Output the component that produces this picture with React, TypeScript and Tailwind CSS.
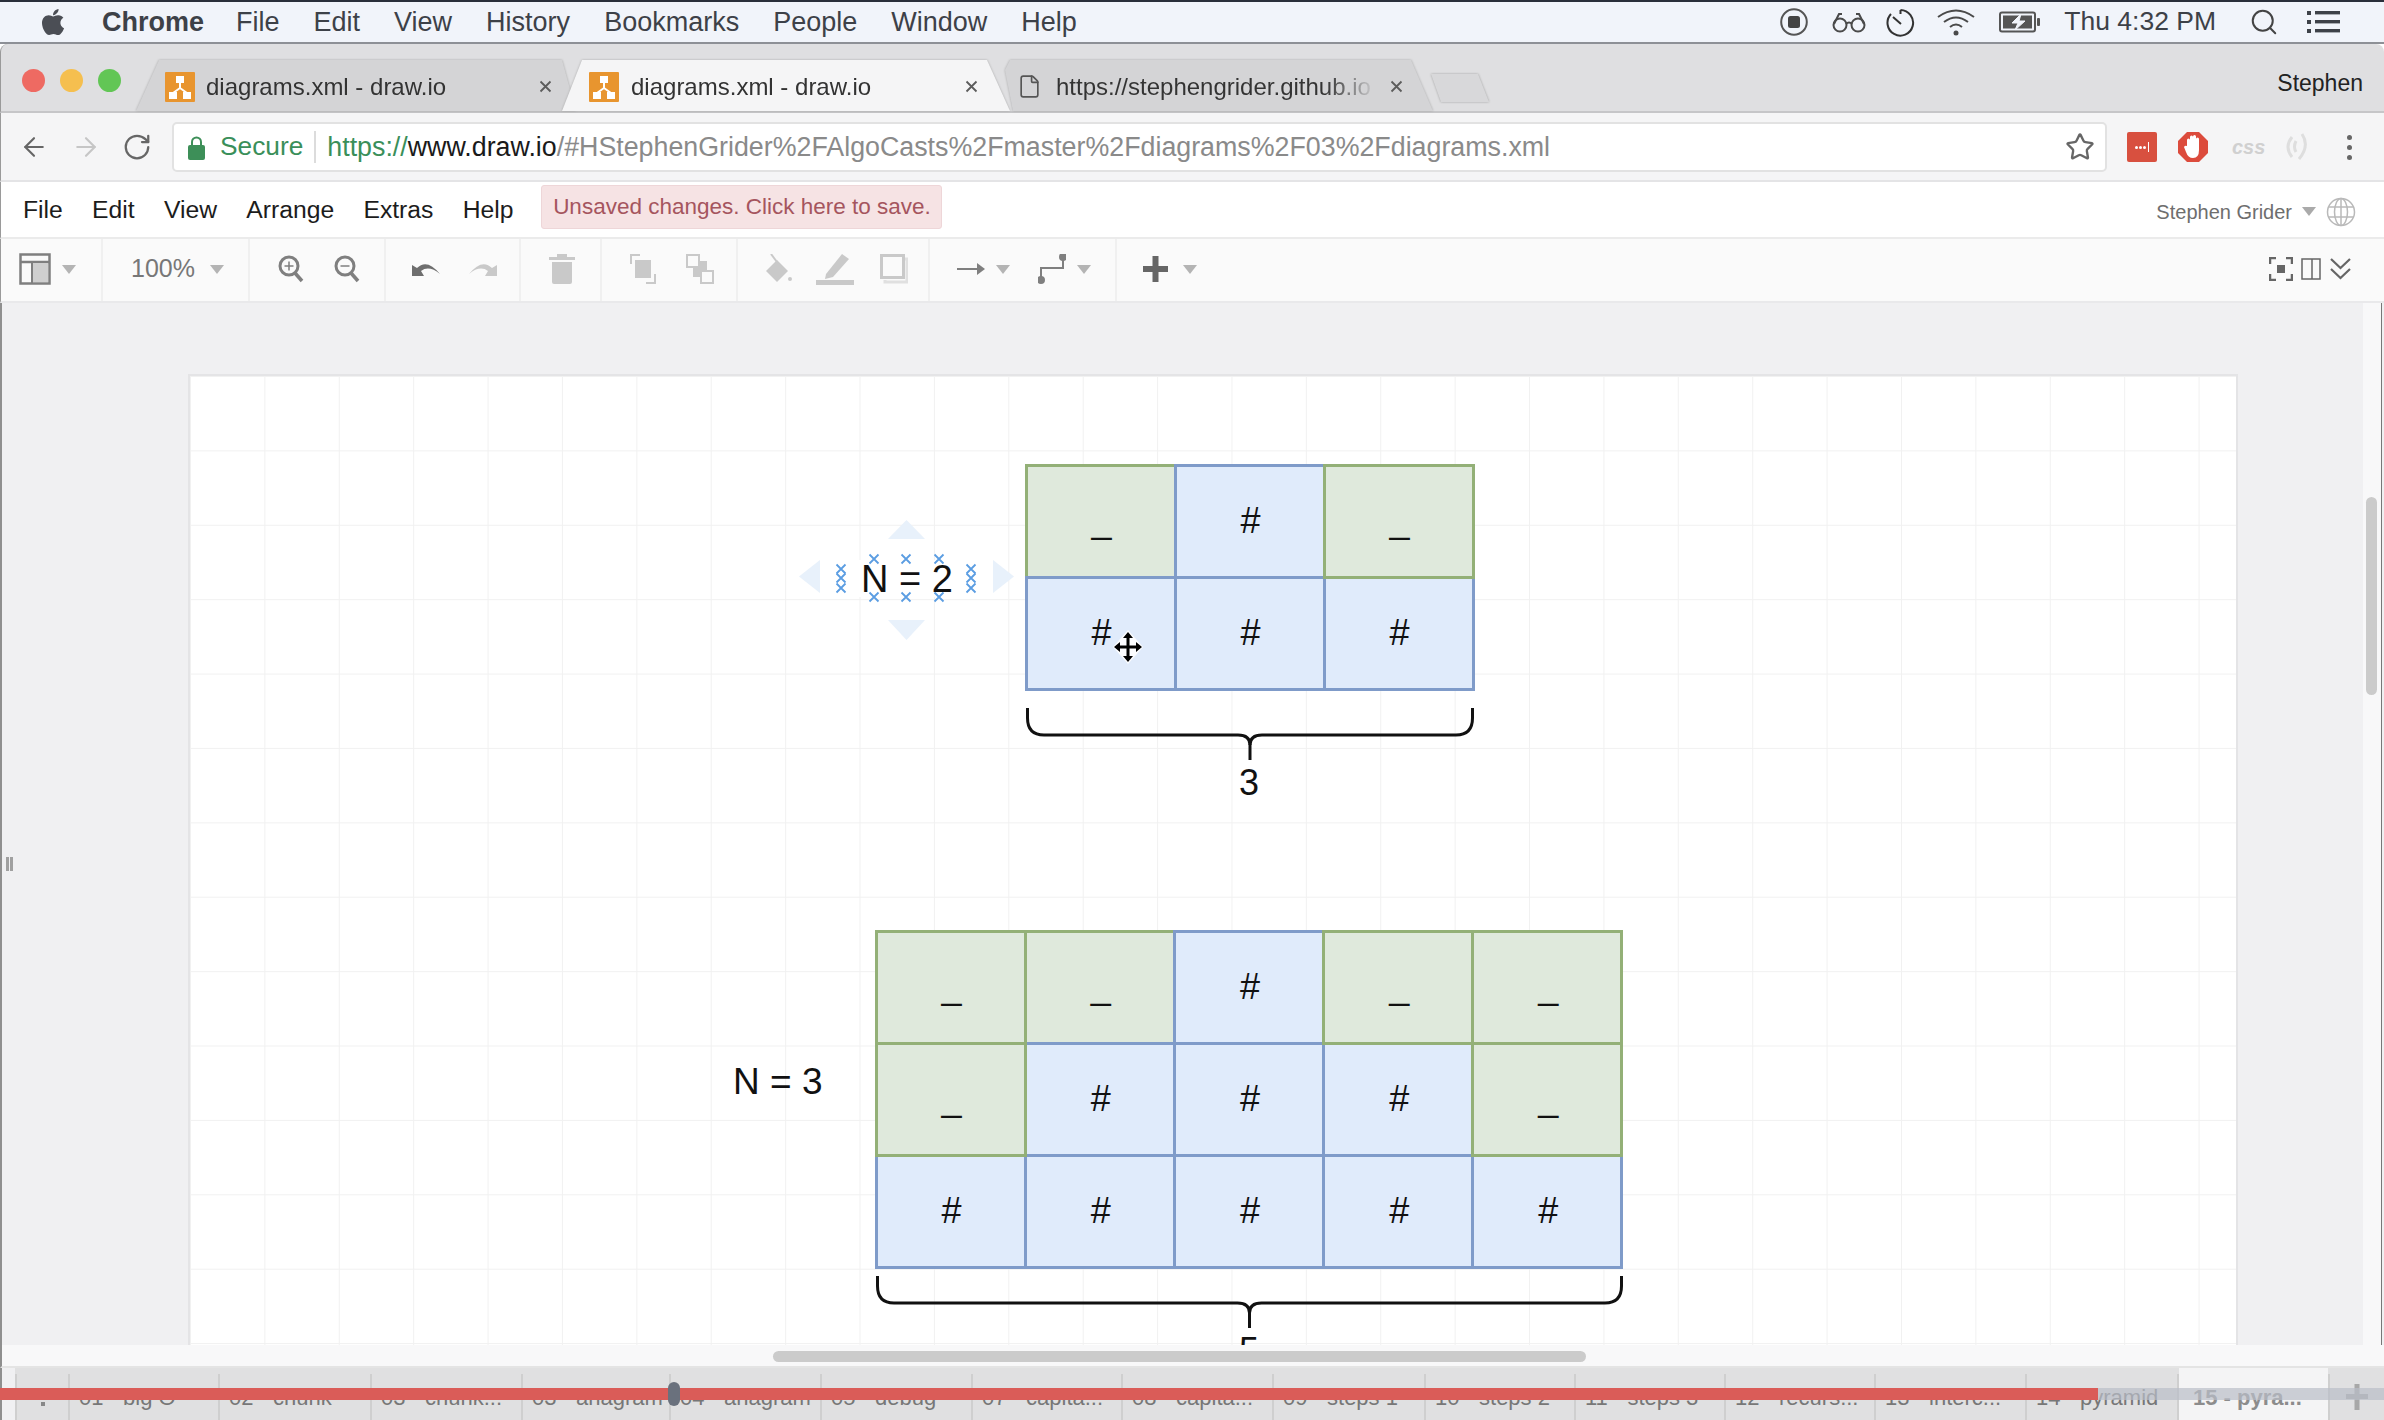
import React from "react";
import { FaApple } from "react-icons/fa";
import { ArrowLeft, ArrowRight, RotateCw, Star, Search, File } from "lucide-react";

const Caret = ({ c = "#b4b4b4" }: { c?: string }) => (
  <svg width="14" height="9" viewBox="0 0 14 9" className="shrink-0"><path d="M0 0H14L7 9Z" fill={c} /></svg>
);

const Favicon = () => (
  <svg width="30" height="30" viewBox="0 0 30 30" className="shrink-0">
    <rect width="30" height="30" rx="1" fill="#e8952f" />
    <path d="M15 10V16M15 16L8 21M15 16L22 21" stroke="#fff" strokeWidth="2" fill="none" />
    <rect x="11" y="4" width="8" height="7" fill="#fff" />
    <rect x="4" y="20" width="8" height="7" fill="#fff" />
    <rect x="18" y="20" width="8" height="7" fill="#fff" />
  </svg>
);

const TabX = () => (
  <svg width="13" height="13" viewBox="0 0 13 13" className="shrink-0">
    <path d="M1.5 1.5L11.5 11.5M11.5 1.5L1.5 11.5" stroke="#5c5c5c" strokeWidth="1.8" />
  </svg>
);

function MacBar() {
  const items = ["File", "Edit", "View", "History", "Bookmarks", "People", "Window", "Help"];
  return (
    <div className="h-[44px] shrink-0 flex items-center bg-[#f1f4fa] border-t-2 border-b-2 border-t-[#2a2f3a] border-b-[#8d9096] text-[#3d4148] text-[27px] pl-[38px] pr-[44px]">
      <FaApple size={30} color="#4b4e55" className="shrink-0" />
      <span className="ml-[34px] font-bold">Chrome</span>
      <div className="flex gap-[34px] ml-[32px]">
        {items.map((t) => (
          <span key={t}>{t}</span>
        ))}
      </div>
      <div className="ml-auto flex items-center">
        <svg width="28" height="28" viewBox="0 0 28 28"><circle cx="14" cy="14" r="12.8" fill="none" stroke="#555" strokeWidth="2" /><rect x="8" y="8" width="12" height="12" rx="2.5" fill="#444" /></svg>
        <svg width="34" height="21" viewBox="0 0 34 21" className="ml-[24px]" fill="none" stroke="#4a4a4a" strokeWidth="2"><circle cx="8" cy="13" r="6.5" /><circle cx="26" cy="13" r="6.5" /><path d="M14 12Q17 9 20 12M2 12L7 2H10M32 12L27 2H24" /></svg>
        <svg width="29" height="29" viewBox="0 0 29 29" className="ml-[20px]" fill="none" stroke="#333" strokeWidth="2"><path d="M14.5 2A12.8 12.8 0 1 1 5 6" /><path d="M14.5 2V6M7 9L15 16" /></svg>
        <svg width="38" height="28" viewBox="0 0 38 28" className="ml-[22px]" fill="none" stroke="#4a4a4a" strokeWidth="2"><path d="M1 9Q19 -4 37 9M7 14Q19 5 31 14M13 19Q19 14 25 19" /><circle cx="19" cy="25" r="2.5" fill="#4a4a4a" stroke="none" /></svg>
        <svg width="42" height="22" viewBox="0 0 42 22" className="ml-[24px]"><rect x="1" y="1.5" width="35" height="19" rx="2" fill="none" stroke="#555" strokeWidth="2" /><rect x="4" y="4.5" width="29" height="13" fill="#555" /><path d="M22 3L13 12H19L16 19L26 10H20Z" fill="#f1f4fa" stroke="#f1f4fa" /><rect x="38" y="7" width="3" height="8" rx="1" fill="#555" /></svg>
        <span className="ml-[23px] text-[26.5px] whitespace-nowrap">Thu 4:32 PM</span>
        <Search size={30} strokeWidth={1.6} color="#444" className="ml-[33px]" />
        <svg width="33" height="24" viewBox="0 0 33 24" className="ml-[28px]" fill="#3d4148"><rect x="0" y="1" width="4" height="4" /><rect x="8" y="1" width="25" height="3.4" /><rect x="0" y="10" width="4" height="4" /><rect x="8" y="10" width="25" height="3.4" /><rect x="0" y="19" width="4" height="4" /><rect x="8" y="19" width="25" height="3.4" /></svg>
      </div>
    </div>
  );
}

function TabStrip() {
  return (
    <div className="h-[69px] shrink-0 flex items-end bg-[#dfdfe1] border-b-2 border-[#c6c6c8] rounded-t-[8px] border-l border-l-[#9a9a9a]">
      <div className="flex gap-[15px] ml-[21px] self-start mt-[25px]">
        <span className="w-[23px] h-[23px] rounded-full bg-[#ee6a62]" />
        <span className="w-[23px] h-[23px] rounded-full bg-[#f5bf4f]" />
        <span className="w-[23px] h-[23px] rounded-full bg-[#62c655]" />
      </div>
      <div className="ml-[15px] w-[440px] h-[51px] shrink-0 [filter:drop-shadow(0_0_1px_#a8a8a8)]">
        <div className="h-full flex items-center bg-[#d4d4d6] [clip-path:polygon(23px_0,426px_0,440px_100%,0_100%)] pl-[29px] pr-[24px] pt-[2px] text-[24px] text-[#333]">
          <Favicon />
          <span className="ml-[11px] whitespace-nowrap">diagrams.xml - draw.io</span>
          <span className="ml-auto"><TabX /></span>
        </div>
      </div>
      <div className="ml-[-14px] relative z-10 w-[448px] h-[51px] shrink-0 [filter:drop-shadow(0_0_1px_#a8a8a8)]">
        <div className="h-full flex items-center bg-[#f5f5f6] [clip-path:polygon(20px_0,425px_0,448px_100%,0_100%)] pl-[27px] pr-[32px] pt-[2px] text-[24px] text-[#333]">
          <Favicon />
          <span className="ml-[12px] whitespace-nowrap">diagrams.xml - draw.io</span>
          <span className="ml-auto"><TabX /></span>
        </div>
      </div>
      <div className="ml-[-5px] w-[428px] h-[51px] shrink-0 [filter:drop-shadow(0_0_1px_#a8a8a8)]">
        <div className="h-full flex items-center bg-[#d4d4d6] [clip-path:polygon(5px_0,406px_0,428px_100%,8px_100%,0_10px)] pl-[12px] pr-[30px] pt-[2px] text-[24px]">
          <File size={25} strokeWidth={1.6} color="#555" className="shrink-0" />
          <span className="ml-[14px] w-[320px] overflow-hidden whitespace-nowrap bg-gradient-to-r from-[#333] from-[84%] to-[#d4d4d6] bg-clip-text text-transparent">https://stephengrider.github.io</span>
          <span className="ml-auto"><TabX /></span>
        </div>
      </div>
      <div className="ml-[-2px] mb-[9px] w-[58px] h-[28px] shrink-0 [filter:drop-shadow(0_0_1px_#a0a0a0)]">
        <div className="h-full bg-[#d8d8da] [clip-path:polygon(0_0,47px_0,58px_100%,10px_100%)]" />
      </div>
      <span className="ml-auto mr-[21px] self-start mt-[22px] text-[23px] text-[#222]">Stephen</span>
    </div>
  );
}

function AddressRow() {
  return (
    <div className="h-[69px] shrink-0 flex items-center bg-[#f5f5f6] border-b-2 border-[#e4e4e6] border-l border-l-[#9a9a9a] pt-[1px]">
      <ArrowLeft size={30} strokeWidth={1.7} color="#666" className="ml-[18px]" />
      <ArrowRight size={30} strokeWidth={1.7} color="#c6c6c6" className="ml-[22px]" />
      <RotateCw size={30} strokeWidth={1.8} color="#666" className="ml-[21px]" />
      <div className="ml-[20px] w-[1935px] h-[50px] shrink-0 flex items-center bg-white border-2 border-[#e2e2e2] rounded-[5px] pl-[14px] pr-[12px] text-[26.3px]">
        <svg width="17" height="25" viewBox="0 0 17 25" className="shrink-0"><path d="M4 11V7A4.5 4.5 0 0 1 13 7V11" fill="none" stroke="#3d8f58" strokeWidth="2" /><rect y="10" width="17" height="15" rx="2" fill="#3d8f58" /></svg>
        <span className="ml-[15px] text-[#3a8f5a]">Secure</span>
        <span className="ml-[11px] w-[2px] h-[32px] bg-[#dcdcdc]" />
        <span className="ml-[11px] whitespace-nowrap text-[26.8px] text-[#8a8a8a]">
          <span className="text-[#3a8f5a]">https://</span>
          <span className="text-[#1a1a1a]">www.draw.io</span>
          /#HStephenGrider%2FAlgoCasts%2Fmaster%2Fdiagrams%2F03%2Fdiagrams.xml
        </span>
        <Star size={30} strokeWidth={1.9} color="#666" className="ml-auto mr-[-2px]" />
      </div>
      <div className="ml-[20px] w-[30px] h-[30px] shrink-0 rounded-[2px] bg-[#d8503f] flex items-center justify-center gap-[1px]">
        <span className="w-[3px] h-[3px] rounded-full bg-white" /><span className="w-[3px] h-[3px] rounded-full bg-white" /><span className="w-[3px] h-[3px] rounded-full bg-white" /><span className="w-[1px] h-[10px] bg-white ml-[1px]" />
      </div>
      <svg width="30" height="30" viewBox="0 0 30 30" className="ml-[21px] shrink-0"><path d="M9 0H21L30 9V21L21 30H9L0 21V9Z" fill="#dc4b3c" /><path d="M9 14V8Q9 6.5 10.5 6.500Q12 6.500 12 8V5Q12 3.500 13.500 3.500Q15 3.500 15 5V4.500Q15 3 16.500 3Q18 3 18 4.500V7Q18 5.500 19.500 5.500Q21 5.500 21 7V18Q21 26 15 26Q10 26 8 20L6 15Q7 13 9 14Z" fill="#fff" /></svg>
      <span className="ml-[24px] w-[30px] text-[20px] italic text-[#d0d0d0] font-bold">css</span>
      <svg width="30" height="30" viewBox="0 0 30 30" className="ml-[21px] shrink-0" fill="none" stroke="#dedede" strokeWidth="3"><path d="M9 5Q1 15 9 25M19 2Q27 14 16 27M13 9Q10 15 13 20" /></svg>
      <div className="ml-[34px] flex flex-col gap-[5px]">
        <span className="w-[5px] h-[5px] rounded-full bg-[#666]" /><span className="w-[5px] h-[5px] rounded-full bg-[#666]" /><span className="w-[5px] h-[5px] rounded-full bg-[#666]" />
      </div>
    </div>
  );
}

function MenuRow() {
  return (
    <div className="h-[57px] shrink-0 flex bg-white border-b-2 border-[#ebebeb] border-l border-l-[#9a9a9a] pl-[22px] pr-[28px]">
      <div className="flex items-center gap-[29.300px] text-[24.7px] text-[#1c1c1c] pt-[1px]">
        {["File", "Edit", "View", "Arrange", "Extras", "Help"].map((t) => (
          <span key={t}>{t}</span>
        ))}
      </div>
      <div className="ml-[28px] mt-[3px] w-[401px] h-[44px] flex items-center justify-center bg-[#f6e3e4] border border-[#eed6d8] rounded-[3px] text-[22.5px] text-[#a5555e] whitespace-nowrap">
        Unsaved changes. Click here to save.
      </div>
      <div className="ml-auto flex items-center pt-[4px]">
        <span className="text-[20px] text-[#6e6e6e]">Stephen Grider</span>
        <span className="ml-[10px]"><Caret c="#aaaaaa" /></span>
        <svg width="30" height="30" viewBox="0 0 30 30" className="ml-[10px]" fill="none" stroke="#b9b9b9" strokeWidth="1.5"><circle cx="15" cy="15" r="13.500" /><ellipse cx="15" cy="15" rx="6.500" ry="13.500" /><path d="M15 1.500V28.500M2 10H28M2 20H28" /></svg>
      </div>
    </div>
  );
}

const D = "#7f7f7f";
const L = "#c9c9c9";

function DrawToolbar() {
  const g = "flex items-center h-full shrink-0 border-r-2 border-[#f0f0f0] pb-[2px]";
  return (
    <div className="h-[64px] shrink-0 flex bg-[#fafafa] border-b-2 border-[#e9e9eb] border-l border-l-[#9a9a9a]">
      <div className={`${g} w-[102px] pl-[18px]`}>
        <svg width="32" height="32" viewBox="0 0 32 32" fill="none"><rect x="1.500" y="1.500" width="29" height="29" stroke={D} strokeWidth="2.500" /><path d="M1.500 9H30.500" stroke={D} strokeWidth="2.500" /><rect x="14" y="10" width="15" height="19" fill="#cfcfcf" /><path d="M13 9V30" stroke={D} strokeWidth="2" /></svg>
        <span className="ml-[11px]"><Caret /></span>
      </div>
      <div className={`${g} w-[147px] pl-[28px]`}>
        <span className="text-[25px] text-[#777]">100%</span>
        <span className="ml-[15px]"><Caret /></span>
      </div>
      <div className={`${g} w-[136px] pl-[28px] gap-[30px]`}>
        <svg width="26" height="28" viewBox="0 0 26 28" fill="none" stroke={D} strokeWidth="3"><circle cx="11" cy="11" r="9" /><path d="M17 18L24 26" strokeWidth="3.500" /><path d="M6.500 11H15.500M11 6.500V15.500" strokeWidth="1.500" /></svg>
        <svg width="26" height="28" viewBox="0 0 26 28" fill="none" stroke={D} strokeWidth="3"><circle cx="11" cy="11" r="9" /><path d="M17 18L24 26" strokeWidth="3.500" /><path d="M6.500 11H15.500" strokeWidth="1.500" /></svg>
      </div>
      <div className={`${g} w-[135px] pl-[26px] gap-[29px]`}>
        <svg width="28" height="18" viewBox="0 0 28 18"><path d="M0 16V5L5 8Q15 -2 28 14Q17 5 9 11L12 16Z" fill="#6e6e6e" /></svg>
        <svg width="28" height="18" viewBox="0 0 28 18"><path d="M28 16V5L23 8Q13 -2 0 14Q11 5 19 11L16 16Z" fill={L} /></svg>
      </div>
      <div className={`${g} w-[81px] pl-[28px]`}>
        <svg width="26" height="30" viewBox="0 0 26 30" fill={L}><rect x="0" y="3" width="26" height="3" /><rect x="8" y="0" width="10" height="3" /><path d="M3 8H23V28Q23 30 21 30H5Q3 30 3 28Z" /></svg>
      </div>
      <div className={`${g} w-[136px] pl-[27px] gap-[29px]`}>
        <svg width="28" height="30" viewBox="0 0 28 30" fill="none"><path d="M2 10V1H11M26 20V29H17" stroke={L} strokeWidth="2" /><rect x="6" y="6" width="16" height="18" fill={L} /></svg>
        <svg width="28" height="30" viewBox="0 0 28 30" fill="none"><rect x="7" y="7" width="14" height="16" fill={L} /><rect x="1" y="1" width="12" height="12" fill="#fafafa" stroke={L} strokeWidth="2" /><rect x="15" y="17" width="12" height="12" fill="#fafafa" stroke={L} strokeWidth="2" /></svg>
      </div>
      <div className={`${g} w-[192px] pl-[28px]`}>
        <svg width="26" height="30" viewBox="0 0 26 30" fill={L}><path d="M11 6L22 17L11 28L0 17Z" /><path d="M11 8L5 0" stroke={L} strokeWidth="2" /><circle cx="24" cy="25" r="2" /></svg>
        <svg width="38" height="32" viewBox="0 0 38 32" className="ml-[24px]" fill={L}><path d="M10 21L26 1L33 6L17 24L9 26Z" /><rect y="27" width="38" height="5" /></svg>
        <svg width="28" height="30" viewBox="0 0 28 30" className="ml-[26px]" fill="none"><rect x="1.500" y="1.500" width="22" height="22" stroke={L} strokeWidth="3" /><path d="M5 26V28H27V5H25" stroke="#e0e0e0" strokeWidth="3" /></svg>
      </div>
      <div className={`${g} w-[187px] pl-[27px]`}>
        <svg width="28" height="14" viewBox="0 0 28 14" fill={D}><rect y="6" width="22" height="2" /><path d="M20 1L28 7L20 13Z" /></svg>
        <span className="ml-[11px]"><Caret /></span>
        <svg width="28" height="30" viewBox="0 0 28 30" className="ml-[28px]" fill="none" stroke={D} strokeWidth="2"><path d="M3 25V14H25V3" /><circle cx="3" cy="26" r="3" fill={D} /><circle cx="25" cy="3" r="3" fill={D} /></svg>
        <span className="ml-[11px]"><Caret /></span>
      </div>
      <div className="flex items-center h-full shrink-0 pl-[26px] pb-[2px]">
        <svg width="25" height="26" viewBox="0 0 25 26" fill="#666"><rect y="10" width="25" height="6" /><rect x="9.500" width="6" height="26" /></svg>
        <span className="ml-[15px]"><Caret /></span>
      </div>
      <div className="ml-auto flex items-center pr-[33px] pb-[2px]">
        <svg width="24" height="24" viewBox="0 0 24 24" fill="none" stroke="#666" strokeWidth="2.500"><path d="M1 7V1H7M17 1H23V7M23 17V23H17M7 23H1V17" /><rect x="8" y="8" width="8" height="8" fill="#666" stroke="none" /></svg>
        <svg width="20" height="22" viewBox="0 0 20 22" className="ml-[8px]" fill="none" stroke="#666" strokeWidth="1.500"><rect x="1" y="1" width="18" height="20" /><path d="M11 1V21" /></svg>
        <svg width="21" height="24" viewBox="0 0 21 24" className="ml-[9px]" fill="none" stroke="#666" strokeWidth="2.200"><path d="M1 2L10.500 11L20 2M1 12L10.500 21L20 12" /></svg>
      </div>
    </div>
  );
}

function Cell({ ch, low }: { ch: string; low?: boolean }) {
  const green = ch === "_";
  return (
    <div
      className={`-m-[1.5px] flex items-center justify-center pl-[2px] border-[3px] text-[36px] leading-none text-[#111] ${
        green ? "bg-[#dfe9dc] border-[#93b077]" : "bg-[#e0ebfb] border-[#7f9bc9]"
      } ${green && !low ? "relative z-10" : ""}`}
    >
      {ch}
    </div>
  );
}

const Brace = ({ w }: { w: number }) => {
  const c = w / 2;
  return (
    <svg width={w} height="52" viewBox={`0 0 ${w} 52`} fill="none" stroke="#111" strokeWidth="3">
      <path d={`M1.500 0V10Q1.500 27 18 27H${c - 12}Q${c} 27 ${c} 37Q${c} 27 ${c + 12} 27H${w - 18}Q${w - 1.5} 27 ${w - 1.5} 10V0`} />
      <path d={`M${c} 36V52`} />
    </svg>
  );
};

const XMark = ({ x, y }: { x: number; y: number }) => (
  <path d={`M${x - 4.5} ${y - 4.5}L${x + 4.500} ${y + 4.500}M${x + 4.500} ${y - 4.500}L${x - 4.500} ${y + 4.500}`} stroke="#5b9de2" strokeWidth="1.800" />
);

function Page() {
  const xs = [
    [75, 39], [107, 39], [140, 39], [75, 77], [107, 77], [140, 77],
    [42, 49], [42, 58], [42, 68], [172, 49], [172, 58], [172, 68],
  ];
  const g1 = ["_#_", "###"];
  const g2 = ["__#__", "_###_", "#####"];
  return (
    <div className="relative mt-[71px] w-[2050px] h-[1100px] shrink-0 border-x-2 border-t-2 border-[#e4e4e6] bg-white bg-[linear-gradient(#f1f1f1_1px,transparent_1px),linear-gradient(90deg,#f1f1f1_1px,transparent_1px)] bg-[size:74.4px_74.4px]">
      <svg width="215" height="120" viewBox="0 0 215 120" className="absolute left-[609px] top-[144px]">
        <path d="M89 19H126L107.500 0ZM89 100H126L107.500 120ZM21 40V73L0 56.500ZM194 40V73L215 56.500Z" fill="#e8f1fb" />
        <rect x="21" y="40" width="173" height="37" fill="#fff" />
        {xs.map(([x, y]) => (
          <XMark key={`${x}-${y}`} x={x} y={y} />
        ))}
      </svg>
      <span className="absolute left-[671px] top-[185px] text-[38px] leading-[36px] text-[#111] whitespace-nowrap">N = 2</span>
      <div className="absolute left-[836px] top-[89px] grid grid-cols-[repeat(3,149px)] grid-rows-[repeat(2,112px)]">
        {g1.flatMap((r, i) => r.split("").map((ch, j) => <Cell key={`${i}${j}`} ch={ch} low={i === 0 && j === 0} />))}
      </div>
      <div className="absolute left-[836px] top-[332px]"><Brace w={448} /></div>
      <span className="absolute left-[1049px] top-[389px] text-[36px] leading-[36px] text-[#111]">3</span>
      <svg width="40" height="40" viewBox="0 0 40 40" className="absolute left-[918px] top-[251px] z-20">
        <path d="M20 3L35 20L20 37L5 20Z" fill="#fff" opacity="0.9" />
        <path d="M20 9V31M10 20H30" stroke="#000" strokeWidth="3" />
        <path d="M20 5L25 11H15ZM20 35L25 29H15ZM6 20L12 15V25ZM34 20L28 15V25Z" fill="#000" />
      </svg>

      <span className="absolute left-[543px] top-[688px] text-[37px] leading-[36px] text-[#111] whitespace-nowrap">N = 3</span>
      <div className="absolute left-[686px] top-[555px] grid grid-cols-[repeat(5,149.2px)] grid-rows-[repeat(3,112px)]">
        {g2.flatMap((r, i) => r.split("").map((ch, j) => <Cell key={`${i}${j}`} ch={ch} low={i === 0 && j === 1} />))}
      </div>
      <div className="absolute left-[686px] top-[900px]"><Brace w={747} /></div>
      <span className="absolute left-[1049px] top-[957px] text-[36px] leading-[36px] text-[#111]">5</span>
    </div>
  );
}

function Canvas() {
  return (
    <div className="h-[1042px] shrink-0 flex overflow-hidden bg-[#f0f0f2] border-l-2 border-[#8f8f8f]">
      <div className="w-[186px] shrink-0 flex">
        <div className="w-[14px] flex items-center justify-center pt-[80px] gap-[1px]">
          <span className="w-[3px] h-[14px] bg-[#a0a0a0]" /><span className="w-[3px] h-[14px] bg-[#a0a0a0]" />
        </div>
      </div>
      <Page />
      <div className="w-[125px] shrink-0" />
      <div className="w-[19px] shrink-0 bg-[#f8f8f9] border-r border-[#777] pl-[3px] pt-[194px]">
        <div className="w-[11px] h-[198px] rounded-full bg-[#cbcbcb]" />
      </div>
    </div>
  );
}

function HScroll() {
  return (
    <div className="h-[23px] shrink-0 bg-[#f8f8f9] pl-[771px] pt-[6px] border-l-2 border-[#8f8f8f] border-b-2 border-b-[#e4e4e4]">
      <div className="w-[813px] h-[11px] rounded-full bg-[#cbcbcb]" />
    </div>
  );
}

function SheetTabs() {
  const tabs: [string, string][] = [
    ["01 - big O", "w-[150px]"],
    ["02 - chunk", "w-[152px]"],
    ["03 - chunk...", "w-[151px]"],
    ["03 - anagram", "w-[148px]"],
    ["04 - anagram", "w-[151px]"],
    ["05 - debug", "w-[151px]"],
    ["07 - capita...", "w-[150px]"],
    ["08 - capita...", "w-[151px]"],
    ["09 - steps 1", "w-[152px]"],
    ["10 - steps 2", "w-[150px]"],
    ["11 - steps 3", "w-[150px]"],
    ["12 - recurs...", "w-[150px]"],
    ["13 - interc...", "w-[151px]"],
    ["14 - pyramid", "w-[152px]"],
  ];
  return (
    <div className="h-[52px] shrink-0 flex bg-[#e0e0e1] text-[22px] text-[#777] pt-[6px] border-l-2 border-[#8f8f8f]">
      <div className="w-[13px] shrink-0 bg-[#f0f0f2] -mt-[6px]" />
      <div className="w-[55px] shrink-0 flex flex-col items-center justify-center gap-[3px] border-x-2 border-[#cfcfcf]">
        <span className="w-[4px] h-[4px] bg-[#888]" /><span className="w-[4px] h-[4px] bg-[#888]" /><span className="w-[4px] h-[4px] bg-[#888]" />
      </div>
      {tabs.map(([t, w]) => (
        <div key={t} className={`${w} shrink-0 pl-[9px] flex items-center whitespace-nowrap border-r-2 border-[#cfcfcf]`}>
          {t}
        </div>
      ))}
      <div className="w-[149px] shrink-0 -mt-[6px] pt-[6px] bg-[#f4f4f5] pl-[14px] flex items-center font-bold text-[#8c8c8c] whitespace-nowrap">15 - pyra...</div>
      <div className="flex-1 flex items-center justify-center border-l-2 border-[#cfcfcf]">
        <svg width="22" height="26" viewBox="0 0 22 26" fill="#a8a8a8"><rect y="10" width="22" height="5" /><rect x="8.500" width="5" height="26" /></svg>
      </div>
    </div>
  );
}

export default function App() {
  return (
    <div className="relative w-[2384px] h-[1420px] overflow-hidden flex flex-col bg-white font-['Liberation_Sans',Arial,sans-serif]">
      <MacBar />
      <TabStrip />
      <AddressRow />
      <MenuRow />
      <DrawToolbar />
      <Canvas />
      <HScroll />
      <SheetTabs />
      <div className="absolute left-0 top-[1388px] w-full h-[12px] bg-[#b9bdc8] opacity-70" />
      <div className="absolute left-0 top-[1388px] w-[2098px] h-[12px] bg-[#da5c58]" />
      <div className="absolute left-[668px] top-[1382px] w-[12px] h-[24px] rounded-full bg-[#6a717d]" />
    </div>
  );
}
